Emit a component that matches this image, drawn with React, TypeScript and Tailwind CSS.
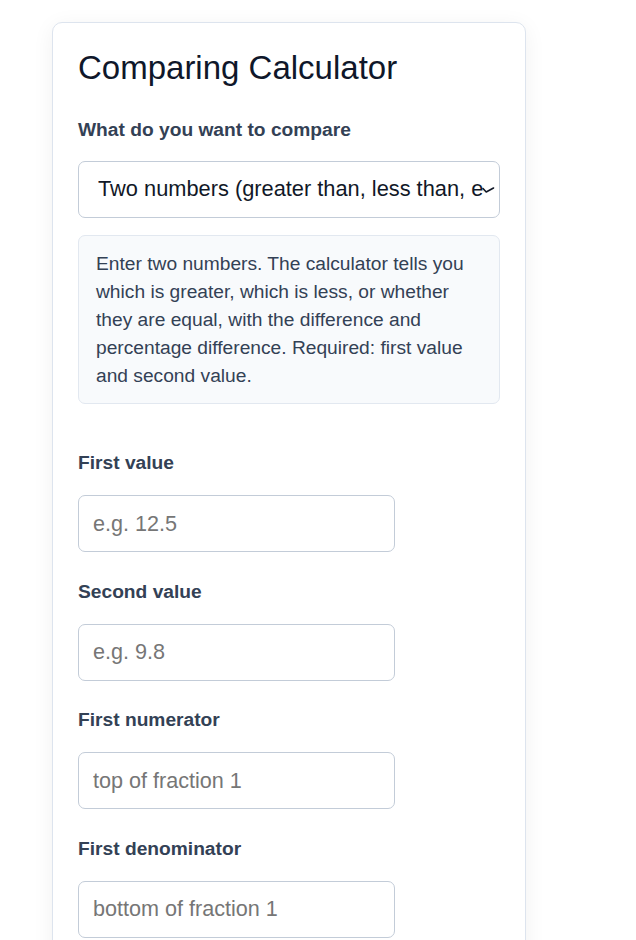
import React from 'react';

const fields = [
  { label: 'First value', placeholder: 'e.g. 12.5' },
  { label: 'Second value', placeholder: 'e.g. 9.8' },
  { label: 'First numerator', placeholder: 'top of fraction 1' },
  { label: 'First denominator', placeholder: 'bottom of fraction 1' },
];

export default function App() {
  return (
    <div className="min-h-screen bg-white font-['Liberation_Sans',Arial,sans-serif]">
      <div className="ml-[52px] mt-[22px] w-[474px] rounded-[10px] border border-[#dde4ee] bg-white px-[25px] pt-[25px] pb-[40px] shadow-[0_4px_22px_rgba(15,23,42,0.06)]">
        <h1 className="text-[33px] leading-[40px] font-normal text-[#0f172a]">Comparing Calculator</h1>

        <label className="mt-[27px] block text-[19.2px] leading-[29px] font-bold text-[#334155]">
          What do you want to compare
        </label>
        <div className="relative mt-[17px]">
          <select className="block h-[57px] w-full appearance-none rounded-[7px] border border-[#c3ccd8] bg-white pl-[19px] pr-[15px] text-[21.8px] text-[#111827] outline-none">
            <option>Two numbers (greater than, less than, equal)</option>
          </select>
          <svg
            className="pointer-events-none absolute right-[5px] top-[26px]"
            width="13"
            height="7"
            viewBox="0 0 13 7"
            fill="none"
          >
            <path d="M1 1.5 L4.2 5 L11.5 1" stroke="#111827" strokeWidth="1.6" strokeLinecap="round" strokeLinejoin="round" />
          </svg>
        </div>

        <div className="mt-[17px] rounded-[7px] border border-[#e2e8f0] bg-[#f8fafc] pl-[17px] pr-[14px] pt-[14px] pb-[13px] text-[19.2px] leading-[28px] text-[#334155]">
          Enter two numbers. The calculator tells you which is greater, which is less, or whether they are equal, with the
          difference and percentage difference. Required: first value and second value.
        </div>

        <div className="mt-[44px] flex flex-col gap-[24.5px]">
          {fields.map((f) => (
            <div key={f.label}>
              <label className="block text-[19.2px] leading-[29px] font-bold text-[#334155]">{f.label}</label>
              <input
                className="mt-[18px] block h-[57px] w-[317px] rounded-[7px] border border-[#c3ccd8] bg-white px-[14px] text-[21.6px] text-[#111827] outline-none placeholder:text-[#767676]"
                placeholder={f.placeholder}
              />
            </div>
          ))}
        </div>
      </div>
    </div>
  );
}
